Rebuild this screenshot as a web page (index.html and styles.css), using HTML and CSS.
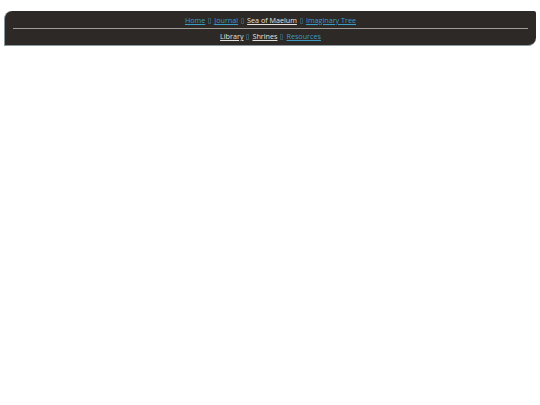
FILE: index.html
```html
<!DOCTYPE html>
<html>
<head>
<meta charset="utf-8">
<link rel="stylesheet" href="styles.css">
</head>
<body>
<nav class="nav">
  <div class="row">
    <a class="link" href="#">Home</a><span class="sep"></span>
    <a class="link" href="#">Journal</a><span class="sep"></span>
    <a class="link visited" href="#">Sea of Maelum</a><span class="sep"></span>
    <a class="link" href="#">Imaginary Tree</a>
  </div>
  <div class="rule"></div>
  <div class="row row-second">
    <a class="link visited" href="#">Library</a><span class="sep"></span>
    <a class="link visited" href="#">Shrines</a><span class="sep"></span>
    <a class="link" href="#">Resources</a>
  </div>
</nav>
</body>
</html>
```
FILE: styles.css
```css
html, body { margin: 0; padding: 0; background: #fff; }
.nav {
  margin: 11px 4px 0 4px;
  height: 35px;
  box-sizing: border-box;
  background: #2d2926;
  border-left: 1px solid #8a9aa0;
  border-bottom: 1px solid #8a9aa0;
  border-radius: 8px 2px 8px 0;
  padding: 2px 8px 0 8px;
  display: flex;
  flex-direction: column;
  font-family: "Open Sans", sans-serif;
  font-size: 7.2px;
}
.row {
  display: flex;
  justify-content: center;
  align-items: center;
  gap: 2px;
  height: 15px;
  line-height: 15px;
}
.row-second {
  height: 15px;
  line-height: 15px;
}
.rule {
  height: 1px;
  background: #a09c98;
}
.link { color: #3a9bc4; text-decoration: underline; }
.link.visited { color: #e4e2de; }
.sep {
  display: inline-block;
  width: 1px;
  height: 4px;
  border: 1px solid #3a5358;
  margin: 0 1px;
}
```
